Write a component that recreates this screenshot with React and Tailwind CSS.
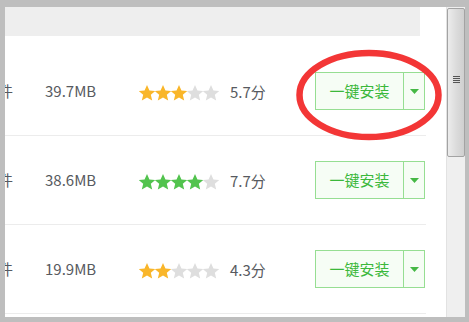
const rows = [
  { size: '39.7MB', stars: 3, color: '#f9b62a', score: '5.7分' },
  { size: '38.6MB', stars: 4, color: '#52c34e', score: '7.7分' },
  { size: '19.9MB', stars: 2, color: '#f9b62a', score: '4.3分' },
];

const Star = ({ fill }) => (
  <svg width="16" height="16" viewBox="1.5 1.5 21 21">
    <path
      d="M12 1.5l3.2 7.1 7.6.7-5.8 5.1 1.8 7.6L12 18l-6.8 4 1.8-7.6-5.8-5.1 7.6-.7z"
      fill={fill}
    />
  </svg>
);

const Row = ({ row }) => (
  <div className="flex h-[89px] w-[421px] items-center border-b border-[#ececec] text-[15px] text-[#575a60]">
    <span className="ml-[-7px] w-[15px] shrink-0">件</span>
    <span className="ml-[32px] w-[94px] shrink-0">{row.size}</span>
    <div className="flex w-[91px] shrink-0 items-center pt-[3px]">
      {[0, 1, 2, 3, 4].map((i) => (
        <Star key={i} fill={i < row.stars ? row.color : '#dedede'} />
      ))}
    </div>
    <span className="w-[85px] shrink-0 pt-[2px]">{row.score}</span>
    <div className="flex h-[38px] w-[110px] shrink-0 border border-[#96de92] bg-[#f6fdf5]">
      <span className="flex w-[88px] items-center justify-center border-r border-[#96de92] text-[15px] text-[#3bb83b]">
        一键安装
      </span>
      <span className="flex flex-1 items-center justify-center">
        <svg width="9" height="5" viewBox="0 0 9 5">
          <path d="M0 0h9L4.5 5z" fill="#45b845" />
        </svg>
      </span>
    </div>
  </div>
);

export default function App() {
  return (
    <div
      className="relative flex h-[322px] w-[469px] bg-[#bebebe] pb-[5px] pl-[5px] pr-[4px] pt-[7px]"
      style={{ fontFamily: '"Noto Sans CJK SC", "Noto Sans", sans-serif' }}
    >
      <div className="flex-1 overflow-hidden bg-white">
        <div className="h-[29px] w-[415px] bg-[#eeeeee]" />
        <div className="mt-[11px]">
          {rows.map((row, i) => (
            <Row key={i} row={row} />
          ))}
        </div>
      </div>

      <div className="flex w-[19px] flex-col border-l border-[#e2e2e2] bg-[#efefef]">
        <div className="mt-[1px] flex h-[149px] items-center justify-center rounded-[2px] border border-[#a3a3a3] bg-gradient-to-r from-[#ececec] via-[#dcdcdc] to-[#cfcfcf]">
          <div className="flex flex-col gap-[1px] pb-[6px]">
            {[0, 1, 2, 3].map((i) => (
              <div key={i} className="h-[1px] w-[7px] bg-[#555]" />
            ))}
          </div>
        </div>
      </div>

      <svg
        className="pointer-events-none absolute left-[293px] top-[47px]"
        width="152"
        height="96"
        viewBox="0 0 152 96"
      >
        <ellipse cx="76" cy="48" rx="69.5" ry="42" fill="none" stroke="#f33636" strokeWidth="6.5" />
      </svg>
    </div>
  );
}
